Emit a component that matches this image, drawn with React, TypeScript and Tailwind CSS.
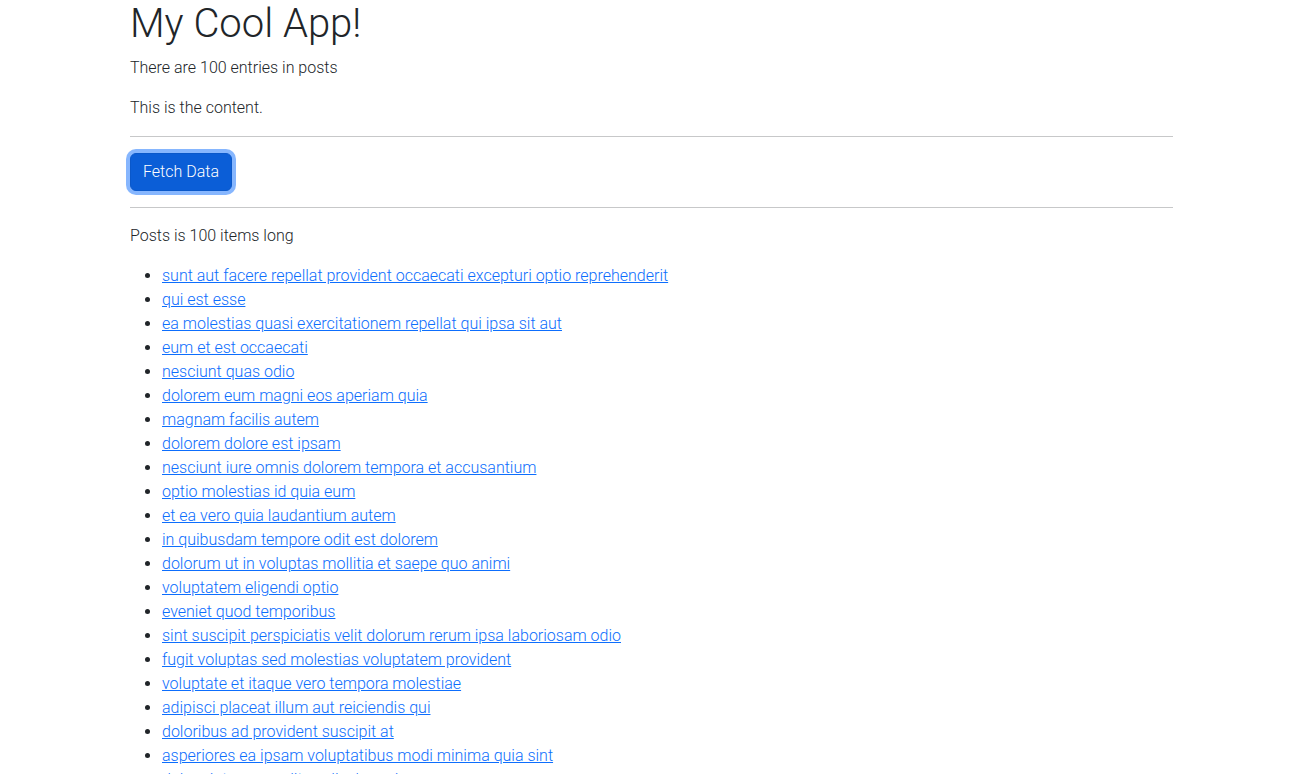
const posts = [
  "sunt aut facere repellat provident occaecati excepturi optio reprehenderit",
  "qui est esse",
  "ea molestias quasi exercitationem repellat qui ipsa sit aut",
  "eum et est occaecati",
  "nesciunt quas odio",
  "dolorem eum magni eos aperiam quia",
  "magnam facilis autem",
  "dolorem dolore est ipsam",
  "nesciunt iure omnis dolorem tempora et accusantium",
  "optio molestias id quia eum",
  "et ea vero quia laudantium autem",
  "in quibusdam tempore odit est dolorem",
  "dolorum ut in voluptas mollitia et saepe quo animi",
  "voluptatem eligendi optio",
  "eveniet quod temporibus",
  "sint suscipit perspiciatis velit dolorum rerum ipsa laboriosam odio",
  "fugit voluptas sed molestias voluptatem provident",
  "voluptate et itaque vero tempora molestiae",
  "adipisci placeat illum aut reiciendis qui",
  "doloribus ad provident suscipit at",
  "asperiores ea ipsam voluptatibus modi minima quia sint",
  "dolor sint quo a velit explicabo quia nam",
  "maxime id vitae nihil numquam",
  "autem hic labore sunt dolores incidunt",
  "rem alias distinctio quo quis",
];

const App = () => {
  return (
    <div className="min-h-screen bg-white font-['Roboto',sans-serif] font-light text-base text-[#212529] leading-6">
      <div className="mx-auto w-[1043px]">
        <h1 className="text-[40px] leading-[48px] font-light mb-2">My Cool App!</h1>
        <p className="mb-4">There are 100 entries in posts</p>
        <p className="mb-4">This is the content.</p>
        <hr className="my-4 border-t border-[#212529]/25" />
        <button className="px-3 py-[6px] rounded-md border border-[#0a58ca] bg-[#0b5ed7] text-white font-light leading-6 ring-4 ring-[#0d6efd]/50">
          Fetch Data
        </button>
        <hr className="my-4 border-t border-[#212529]/25" />
        <p className="mb-4">Posts is 100 items long</p>
        <ul className="list-disc pl-8 mb-4">
          {posts.map((title, i) => (
            <li key={i}>
              <a href="#" className="text-[#0d6efd] underline">
                {title}
              </a>
            </li>
          ))}
        </ul>
      </div>
    </div>
  );
};

export default App;
